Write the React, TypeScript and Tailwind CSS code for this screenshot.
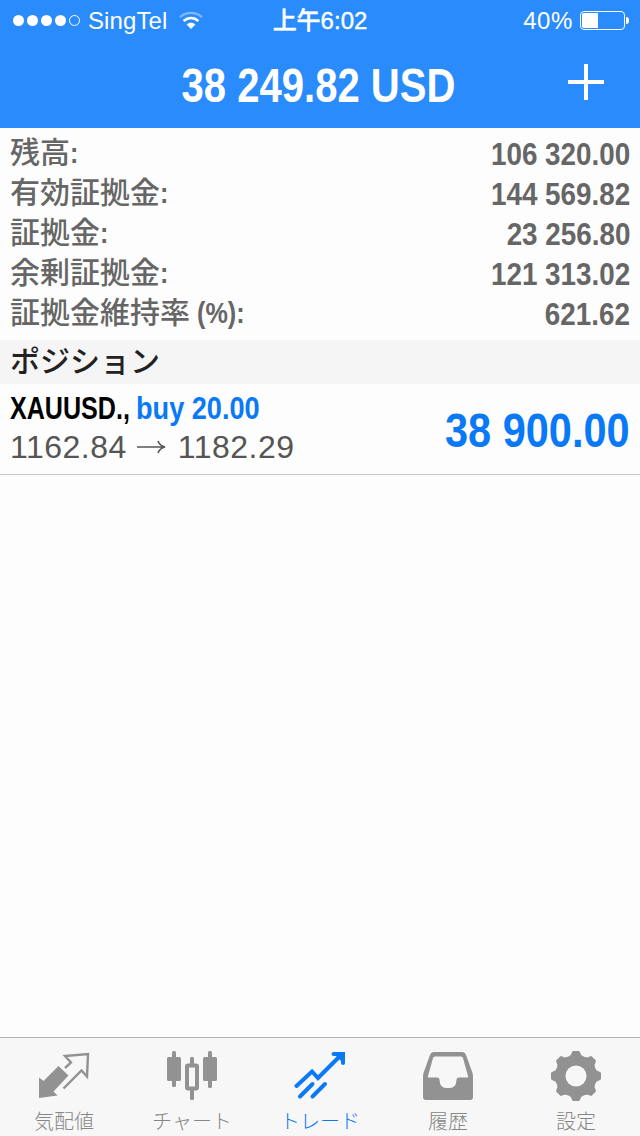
import React, { type FC, type ReactNode } from "react";

const SANS = "font-['Liberation_Sans','Noto_Sans_CJK_JP',sans-serif]";

const account = [
  { label: "残高", suffix: ":", value: "106 320.00" },
  { label: "有効証拠金", suffix: ":", value: "144 569.82" },
  { label: "証拠金", suffix: ":", value: "23 256.80" },
  { label: "余剰証拠金", suffix: ":", value: "121 313.02" },
  { label: "証拠金維持率", suffix: " (%):", value: "621.62" },
];

const WifiIcon: FC = () => (
  <svg className="mt-px ml-3 h-[18px] w-6" viewBox="0 0 24 18" fill="none" stroke="#fff">
    <path d="M1 5.200C7.500-.6 16.500-.6 23 5.200" strokeWidth="2.400" opacity="0.4" />
    <path d="M4.600 9C9 4.900 15 4.900 19.400 9" strokeWidth="2.400" />
    <path d="M7.600 12.500C10.200 10.100 13.800 10.100 16.400 12.500L12 17z" fill="#fff" stroke="none" />
  </svg>
);

const StatusBar: FC = () => (
  <div className="grid h-10 grid-cols-3 items-center text-[24px] leading-9">
    <div className="flex items-center pl-[13px]">
      <div className="flex gap-[3px]">
        <i className="size-[11px] rounded-full bg-white" />
        <i className="size-[11px] rounded-full bg-white" />
        <i className="size-[11px] rounded-full bg-white" />
        <i className="size-[11px] rounded-full bg-white" />
        <i className="size-[11px] rounded-full border border-white" />
      </div>
      <span className="mt-0.5 ml-2 tracking-[0.1px] whitespace-nowrap">SingTel</span>
      <WifiIcon />
    </div>
    <div className="mt-0.5 text-center font-medium [-webkit-text-stroke:0.4px_white]">上午6:02</div>
    <div className="flex items-center justify-end pr-[11px]">
      <span className="mt-0.5 tracking-[0.6px]">40%</span>
      <div className="ml-[7px] h-[19px] w-[45px] rounded-[4px] border border-white p-px">
        <div className="h-full w-4 rounded-l-[2px] bg-white" />
      </div>
      <i className="ml-px h-[7px] w-[3px] rounded-r-full bg-white" />
    </div>
  </div>
);

const QuotesIcon: FC = () => (
  <svg className="h-[52px] w-[52px]" viewBox="0 0 52 52">
    <path d="M1 26.500L5.500 30 20.500 15 30.500 24.500 15.500 40.500 19.500 44.500 1 47z" fill="#929292" />
    <path d="M27 17L33 11.500 27 5 50 3 49 25.500 43.500 19.500 25.500 37.500" fill="none" stroke="#929292" strokeWidth="2.400" />
  </svg>
);

const ChartIcon: FC = () => (
  <svg className="h-[52px] w-[52px]" viewBox="0 0 52 52" fill="#929292">
    <rect x="1" y="6" width="14" height="24" rx="1.500" />
    <rect x="6" y="0" width="4" height="36" rx="1.500" />
    <rect x="37" y="6" width="14" height="24" rx="1.500" />
    <rect x="42" y="0" width="4" height="37" rx="1.500" />
    <rect x="24" y="6" width="4" height="9" rx="1.500" />
    <rect x="24" y="38" width="4" height="11" rx="1.500" />
    <rect x="21" y="14.500" width="10" height="23" rx="1" fill="none" stroke="#929292" strokeWidth="4" />
  </svg>
);

const TradeIcon: FC = () => (
  <svg className="h-[52px] w-[52px]" viewBox="0 0 52 52" fill="none" stroke="#0a79f7" strokeWidth="4" strokeLinecap="round">
    <path d="M2.500 35L18 20.500 24 27 47 4" />
    <path d="M39.500 3H49V12" />
    <path d="M6 45.500L18.500 33M18.500 45.500L31 33" />
    <path d="M40 3H49V12z" fill="#0a79f7" stroke="none" />
  </svg>
);

const HistoryIcon: FC = () => (
  <svg className="h-[52px] w-[52px]" viewBox="0 0 52 52" fill="#929292" fillRule="evenodd">
    <path d="M12 1H40Q43 1 44 4L50.500 22Q51 24 51 26V46Q51 49 48 49H4Q1 49 1 46V26Q1 24 1.500 22L8 4Q9 1 12 1zM13 5.500Q11.500 5.500 11 7L6 25V26.500H15.500Q17.500 26.500 17.500 29Q18 37 24 37H28Q34 37 34.500 29Q34.500 26.500 36.500 26.500H46V25L41 7Q40.500 5.500 39 5.500z" />
  </svg>
);

const SettingsIcon: FC = () => (
  <svg className="h-[52px] w-[52px]" viewBox="0 0 52 52">
    <g fill="#929292" stroke="#929292" strokeLinejoin="round" strokeWidth="3">
      <circle cx="26" cy="25" r="19" />
      <path d="M19 7L22 5 23.500 1.500H28.500L30 5 33 7V43L30 45 28.500 48.500H23.500L22 45 19 43z" />
      <path d="M19 7L22 5 23.500 1.500H28.500L30 5 33 7V43L30 45 28.500 48.500H23.500L22 45 19 43z" transform="rotate(45 26 25)" />
      <path d="M19 7L22 5 23.500 1.500H28.500L30 5 33 7V43L30 45 28.500 48.500H23.500L22 45 19 43z" transform="rotate(90 26 25)" />
      <path d="M19 7L22 5 23.500 1.500H28.500L30 5 33 7V43L30 45 28.500 48.500H23.500L22 45 19 43z" transform="rotate(135 26 25)" />
    </g>
    <circle cx="26" cy="25" r="10.500" fill="#f7f7f7" />
  </svg>
);

const Tab: FC<{ label: string; active?: boolean; children: ReactNode }> = ({ label, active, children }) => (
  <div className={`flex flex-col items-center pt-[13px] ${active ? "text-[#0a79f7]" : "text-[#868686]"}`}>
    {children}
    <span className="mt-[5px] text-[20px] leading-[28px] font-light whitespace-nowrap">{label}</span>
  </div>
);

const App: FC = () => (
  <div className={`flex h-[1136px] w-[640px] flex-col overflow-hidden bg-[#fdfdfd] ${SANS}`}>
    <header className="h-32 bg-[#2a8bfd] text-white">
      <StatusBar />
      <div className="grid h-[88px] grid-cols-[1fr_auto_1fr] items-center">
        <h1 className="col-start-2 scale-x-[0.834] pt-1 pr-1 text-[48px] leading-[84px] font-bold whitespace-nowrap">38 249.82 USD</h1>
        <svg className="mr-[36px] mb-1 size-9 justify-self-end" viewBox="0 0 36 36" stroke="#fff" strokeWidth="4">
          <path d="M18 0V36M0 18H36" />
        </svg>
      </div>
    </header>

    <dl className="h-[212px] px-[10px] pt-[6px] text-[32px] leading-10 text-[#666]">
      {account.map(({ label, suffix, value }) => (
        <div key={label} className="flex h-10 justify-between">
          <dt className="flex text-[30px] leading-[38px] font-medium">
            <span>{label}</span>
            <span className="origin-left scale-x-[0.84] font-bold whitespace-pre">{suffix}</span>
          </dt>
          <dd className="origin-right scale-x-[0.869] font-bold">{value}</dd>
        </div>
      ))}
    </dl>

    <h2 className="h-11 bg-[#f5f5f5] pl-[10px] text-[30px] leading-[44px] font-medium text-[#222]">ポジション</h2>

    <div className="flex h-[91px] items-center justify-between border-b border-[#c8c8c8] px-[10px]">
      <div className="pb-[3px]">
        <div className="flex text-[32px] leading-[38px] font-bold whitespace-nowrap">
          <span className="w-[126px] origin-left scale-x-[0.784] text-black">XAUUSD.,</span>
          <span className="origin-left scale-x-[0.848] text-[#0a79f7]">buy 20.00</span>
        </div>
        <div className="flex items-center pt-px text-[32px] leading-[38px] tracking-[0.5px] text-[#555]">
          <span>1162.84</span>
          <svg className="mr-[12px] ml-[10px] h-4 w-[29px]" viewBox="0 0 29 16" fill="none" stroke="#555" strokeWidth="1.600">
            <path d="M0 8H28M21 2Q23 7 28 8Q23 9 21 14" />
          </svg>
          <span>1182.29</span>
        </div>
      </div>
      <span className="origin-right scale-x-[0.864] pt-[3px] text-[48px] font-bold text-[#0a79f7]">38 900.00</span>
    </div>

    <nav className="mt-auto grid h-[99px] grid-cols-5 border-t border-[#b2b2b2] bg-[#f7f7f7]">
      <Tab label="気配値">
        <QuotesIcon />
      </Tab>
      <Tab label="チャート">
        <ChartIcon />
      </Tab>
      <Tab label="トレード" active>
        <TradeIcon />
      </Tab>
      <Tab label="履歴">
        <HistoryIcon />
      </Tab>
      <Tab label="設定">
        <SettingsIcon />
      </Tab>
    </nav>
  </div>
);

export default App;
